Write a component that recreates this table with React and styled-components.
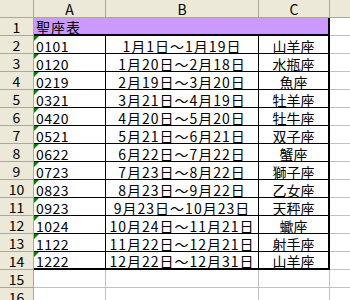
import styled, { createGlobalStyle } from "styled-components";

const GlobalStyle = createGlobalStyle`
  html, body {
    margin: 0;
    padding: 0;
    background: #ffffff;
    overflow: hidden;
  }
`;

const FONT = `"MS PGothic", "Noto Sans CJK JP", sans-serif`;

const Sheet = styled.div`
  display: grid;
  grid-template-columns: 34px 72px 153px 71px 72px;
  grid-auto-rows: 18px;
  width: 402px;
  font-family: ${FONT};
  font-size: 14px;
  color: #000;
  background: #fff;
`;

const Head = styled.div`
  box-sizing: border-box;
  background: #ece9d8;
  border-right: 1px solid #aca899;
  border-bottom: 1px solid #aca899;
  display: flex;
  align-items: center;
  justify-content: center;
  line-height: 14px;
  padding-top: 1px;
`;

const Cell = styled.div`
  box-sizing: border-box;
  position: relative;
  display: flex;
  align-items: flex-end;
  justify-content: ${(p) => p.$align || "flex-start"};
  padding-left: ${(p) => (p.$align ? "0" : "2px")};
  line-height: 14px;
  letter-spacing: ${(p) => p.$spacing || "0"};
  white-space: nowrap;
  grid-column: ${(p) => (p.$span ? `span ${p.$span}` : "auto")};
  background: ${(p) => p.$bg || "transparent"};
  border-right: ${(p) => p.$right || "1px solid #c0c0c0"};
  border-bottom: ${(p) => p.$bottom || "1px solid #c0c0c0"};
`;

const TextFlag = styled.span`
  position: absolute;
  left: 0;
  top: 0;
  width: 0;
  height: 0;
  border-top: 5px solid #008000;
  border-right: 5px solid transparent;
`;

const rows = [
  ["0101", "1月1日～1月19日", "山羊座"],
  ["0120", "1月20日～2月18日", "水瓶座"],
  ["0219", "2月19日～3月20日", "魚座"],
  ["0321", "3月21日～4月19日", "牡羊座"],
  ["0420", "4月20日～5月20日", "牡牛座"],
  ["0521", "5月21日～6月21日", "双子座"],
  ["0622", "6月22日～7月22日", "蟹座"],
  ["0723", "7月23日～8月22日", "獅子座"],
  ["0823", "8月23日～9月22日", "乙女座"],
  ["0923", "9月23日～10月23日", "天秤座"],
  ["1024", "10月24日～11月21日", "蠍座"],
  ["1122", "11月22日～12月21日", "射手座"],
  ["1222", "12月22日～12月31日", "山羊座"],
];

const THIN = "1px solid #000";
const THICK = "2px solid #000";

export default function App() {
  return (
    <>
      <GlobalStyle />
      <Sheet>
        <Head />
        <Head>A</Head>
        <Head>B</Head>
        <Head>C</Head>
        <Head />

        <Head>1</Head>
        <Cell $span={3} $bg="#cc99ff" $right={THICK} $bottom={THICK} $spacing="1px">
          聖座表
        </Cell>
        <Cell />

        {rows.map((r, i) => {
          const last = i === rows.length - 1;
          const bottom = last ? THICK : THIN;
          return [
            <Head key={`h${i}`}>{i + 2}</Head>,
            <Cell key={`a${i}`} $right={THIN} $bottom={bottom} $spacing="0.5px">
              <TextFlag />
              {r[0]}
            </Cell>,
            <Cell key={`b${i}`} $align="center" $right={THIN} $bottom={bottom} $spacing="1px">
              {r[1]}
            </Cell>,
            <Cell key={`c${i}`} $align="center" $right={THICK} $bottom={bottom}>
              {r[2]}
            </Cell>,
            <Cell key={`d${i}`} />,
          ];
        })}

        {[15, 16].map((n) => [
          <Head key={`h${n}`}>{n}</Head>,
          <Cell key={`a${n}`} />,
          <Cell key={`b${n}`} />,
          <Cell key={`c${n}`} />,
          <Cell key={`d${n}`} />,
        ])}
      </Sheet>
    </>
  );
}
